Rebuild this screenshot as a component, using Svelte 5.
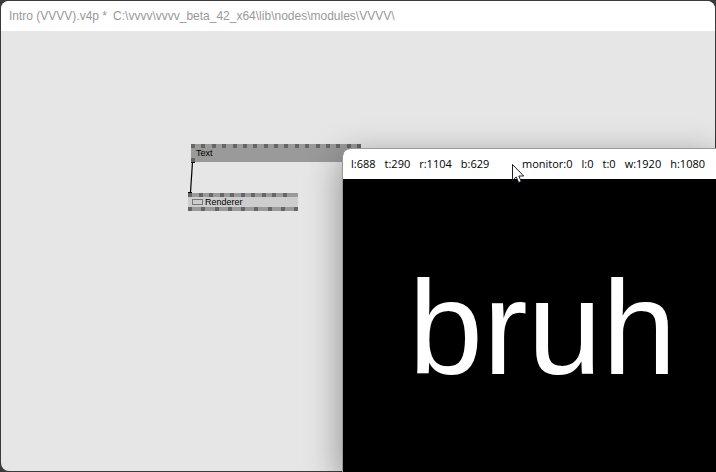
<script>
  const renderer = { left: 688, top: 290, right: 1104, bottom: 629 };
  const monitor = { index: 0, left: 0, top: 0, width: 1920, height: 1080 };
  const pins = (count) => Array.from({ length: count }, (_, i) => i);
</script>

<div class="screen">
  <main class="patch">
    <header class="title"><span>Intro (VVVV).v4p *</span><span>C:\vvvv\vvvv_beta_42_x64\lib\nodes\modules\VVVV\</span></header>
    <section class="canvas">
      <div class="node text">
        <div class="pins">{#each pins(17) as pin (pin)}<i></i>{/each}</div>
        <div class="label">Text</div>
        <div class="pins"><i></i></div>
      </div>
      <div class="node renderer">
        <div class="pins inputs">{#each pins(10) as pin (pin)}<i></i>{/each}</div>
        <div class="label"><b></b>Renderer</div>
        <div class="pins">{#each pins(9) as pin (pin)}<i></i>{/each}</div>
      </div>
      <svg class="link" width="7" height="31" viewBox="0 0 7 31" aria-hidden="true">
        <path d="M4.5 0L2.5 30" fill="none" stroke="#000" stroke-width="1.2" />
        <path d="M3 .5h4M0 30.5h4" stroke="#000" />
      </svg>
    </section>
  </main>

  <section class="window">
    <header class="bar">
      <div class="group">
        <span>l:{renderer.left}</span><span>t:{renderer.top}</span><span>r:{renderer.right}</span><span>b:{renderer.bottom}</span>
      </div>
      <div class="group">
        <span>monitor:{monitor.index}</span><span>l:{monitor.left}</span><span>t:{monitor.top}</span><span>w:{monitor.width}</span><span>h:{monitor.height}</span>
      </div>
    </header>
    <div class="output">bruh</div>
  </section>

  <svg class="cursor" width="13" height="20" viewBox="0 0 13 20" aria-hidden="true">
    <path d="M.5.5V16.5L4.2 12.9L6.7 18.5L9.2 17.4L6.8 12H11.7Z" fill="#fff" stroke="#1c1c28" />
  </svg>
</div>

<style>
  .screen {
    position: relative;
    box-sizing: border-box;
    height: 100vh;
    padding: 1px;
    overflow: hidden;
    background: #3a3a3a;
  }
  .patch {
    display: flex;
    flex-direction: column;
    height: 100%;
    overflow: hidden;
    border-radius: 8px;
    background: #e6e6e6;
  }
  .title {
    display: flex;
    gap: 6px;
    padding: 0 8px;
    background: #fff;
    color: #999;
    font: 12px/30px "Liberation Sans", Arial, sans-serif;
    white-space: nowrap;
  }
  .canvas {
    position: relative;
    flex: 1;
  }
  .node {
    position: absolute;
    font: 9px/10px "Liberation Sans", Arial, sans-serif;
    color: #000;
  }
  .node.text {
    left: 190px;
    top: 113px;
    width: 170px;
    background: #9a9a9a;
  }
  .node.renderer {
    left: 187px;
    top: 162px;
    width: 110px;
    background: #cdcdcd;
  }
  .pins {
    display: flex;
    justify-content: space-between;
    height: 4px;
    background: #9a9a9a;
  }
  .pins.inputs {
    padding-right: 11px;
  }
  .pins i {
    width: 4px;
    background: #666;
  }
  .label {
    display: flex;
    align-items: center;
    gap: 2px;
    height: 10px;
    padding-left: 4px;
  }
  .text .label {
    padding-left: 5px;
  }
  .label b {
    box-sizing: border-box;
    width: 11px;
    height: 6px;
    border: 1px solid #777;
  }
  .link {
    position: absolute;
    left: 187px;
    top: 131px;
  }
  .window {
    position: absolute;
    left: 342px;
    right: 0;
    top: 148px;
    bottom: 0;
    display: flex;
    flex-direction: column;
    overflow: hidden;
    border: 1px solid #999;
    border-width: 1px 0 0 1px;
    border-radius: 8px 0 0 0;
    background: #000;
    box-shadow: 0 10px 36px rgba(0, 0, 0, 0.4);
  }
  .bar {
    display: flex;
    justify-content: space-between;
    padding: 0 11px 0 8px;
    background: #fff;
    color: #000;
    font: 11px/30px "Open Sans", sans-serif;
    white-space: nowrap;
  }
  .group {
    display: flex;
    gap: 9px;
  }
  .output {
    flex: 1;
    display: flex;
    align-items: center;
    justify-content: center;
    padding: 4px 0 0 26px;
    color: #fff;
    font: 134px/150px "Liberation Sans", Arial, sans-serif;
  }
  .cursor {
    position: absolute;
    left: 512px;
    top: 164px;
  }
</style>
